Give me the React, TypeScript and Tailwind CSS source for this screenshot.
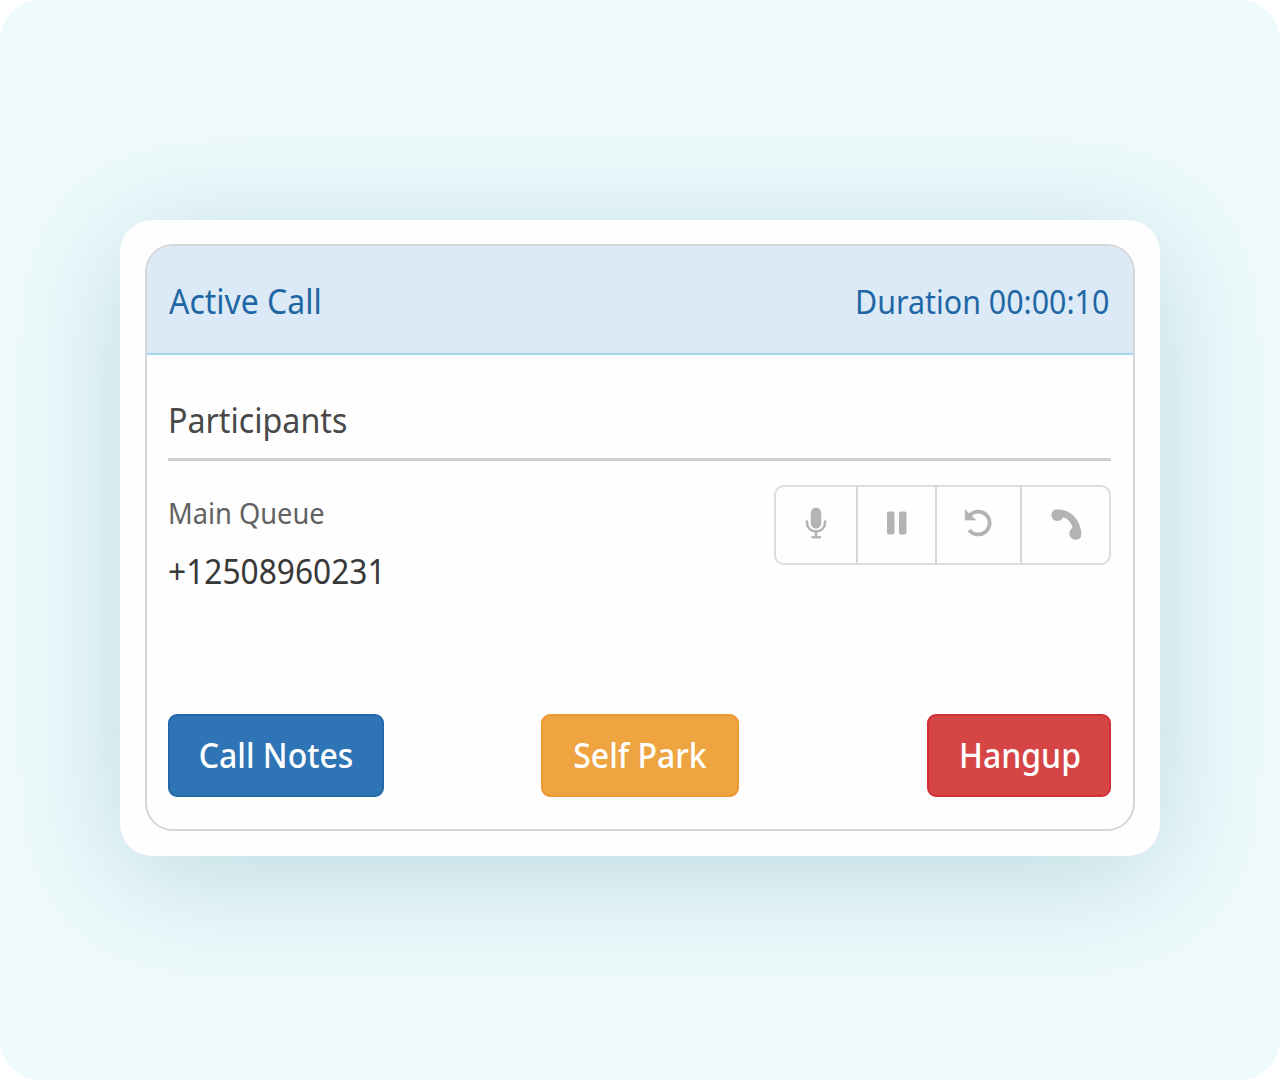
import type { ReactNode } from "react";

function IconCell({ width, children }: { width: number; children: ReactNode }) {
  return (
    <button type="button" style={{ width }} className="flex h-full items-center justify-center border-r-2 border-[#d6d6d6] last:border-r-0">
      {children}
    </button>
  );
}

function MicIcon() {
  return (
    <svg className="mb-1" width="22" height="32" viewBox="0 0 22 32" fill="none">
      <rect x="5.800" y="0.500" width="10.400" height="21" rx="5.200" fill="#b3b3b3" />
      <path d="M2 14.500v1.500a9 8.500 0 0 0 18 0v-1.500" stroke="#b3b3b3" strokeWidth="2.400" strokeLinecap="round" />
      <path d="M11 24.500v5.500M7.500 30.200h7.500" stroke="#b3b3b3" strokeWidth="2.600" strokeLinecap="round" />
    </svg>
  );
}

function PauseIcon() {
  return (
    <svg className="mb-1" width="20" height="24" viewBox="0 0 20 24" fill="#b3b3b3">
      <rect x="0" y="0.500" width="7.500" height="23" rx="1.800" />
      <rect x="12" y="0.500" width="7.500" height="23" rx="1.800" />
    </svg>
  );
}

function UndoIcon() {
  return (
    <svg className="mr-0.5 mb-1" width="28" height="28" viewBox="0 0 28 28" fill="none">
      <path d="M6 6.200A11.400 11.400 0 1 1 5.200 21" stroke="#b3b3b3" strokeWidth="3.700" />
      <path d="M1.200.8v10.200H11.700z" fill="#b3b3b3" stroke="#b3b3b3" strokeWidth=".6" strokeLinejoin="round" />
    </svg>
  );
}

function PhoneIcon() {
  return (
    <svg className="ml-0.5" width="32" height="32" viewBox="0 0 32 32" fill="#b3b3b3">
      <path d="M4.500 .6C9 .2 13 .8 16.500 2.500c6 3 10.500 8.500 12.500 15 1.200 3.500 1.800 7.500 1 10-.8 2.700-4 3.600-6.600 3.200-3.400-.6-5.100-3.900-4.900-6.900.1-2.200 1.300-4 2.900-5-.5-3-2.300-5.800-4.600-8-1.600-1.600-3.300-2.300-5.100-2.200-.4 1.500-1.400 2.600-2.800 3-2.800.8-6.300.1-7.600-2.300C-.3 6.500.2 1.400 4.500 .6z" />
    </svg>
  );
}

export default function App() {
  return (
    <div className="h-[1080px] w-[1280px] bg-white font-['Noto_Sans',sans-serif]">
      <div className="h-full overflow-hidden rounded-[40px] bg-[#eefafc] px-[120px] pt-[220px]">
        <div className="h-[636px] rounded-[32px] bg-[#fefefe] px-[25px] pt-[24px] shadow-[0_20px_120px_rgba(0,110,130,0.22)]">
          <div className="h-[587px] overflow-hidden rounded-[28px] border-2 border-[#d5d6d8]">
            <div className="flex h-[109px] items-center justify-between border-b-2 border-[#a9d4ef] bg-[#dbeaf6] pt-1 pr-[24px] pl-[22px] text-[#1e67a4]">
              <h1 className="origin-left scale-x-94 text-[34px]">Active Call</h1>
              <span className="origin-right scale-x-[0.92] text-[33px]">Duration 00:00:10</span>
            </div>

            <div className="pr-[22px] pl-[21px]">
              <div className="flex h-[106px] items-end border-b-[3px] border-[#cfcfcf] pb-[14px]">
                <h2 className="origin-left scale-x-[0.947] text-[34px] leading-[48px] text-[#484848]">Participants</h2>
              </div>

              <div className="flex h-[253px] items-start justify-between pt-[24px]">
                <div className="-mt-px flex flex-col">
                  <span className="origin-left scale-x-94 text-[29px] leading-[58px] text-[#626262]">Main Queue</span>
                  <span className="origin-left scale-x-[0.932] text-[34px] leading-[58px] text-[#383838]">+12508960231</span>
                </div>
                <div className="flex h-[80px] w-[337px] rounded-[10px] border-2 border-[#dcdcdc]">
                  <IconCell width={82}><MicIcon /></IconCell>
                  <IconCell width={79}><PauseIcon /></IconCell>
                  <IconCell width={85}><UndoIcon /></IconCell>
                  <IconCell width={87}><PhoneIcon /></IconCell>
                </div>
              </div>

              <div className="flex h-[83px] justify-between text-[34px] font-medium text-white">
                <button type="button" className="w-[216px] rounded-[9px] border-2 border-[#2369aa] bg-[#2f74b5]">
                  <span className="block scale-x-94">Call Notes</span>
                </button>
                <button type="button" className="mr-[31px] w-[198px] rounded-[9px] border-2 border-[#ed9830] bg-[#eea440]">
                  <span className="block scale-x-94">Self Park</span>
                </button>
                <button type="button" className="w-[184px] rounded-[9px] border-2 border-[#d03036] bg-[#d64545] pl-0.5">
                  <span className="block scale-x-94">Hangup</span>
                </button>
              </div>
            </div>
          </div>
        </div>
      </div>
    </div>
  );
}
